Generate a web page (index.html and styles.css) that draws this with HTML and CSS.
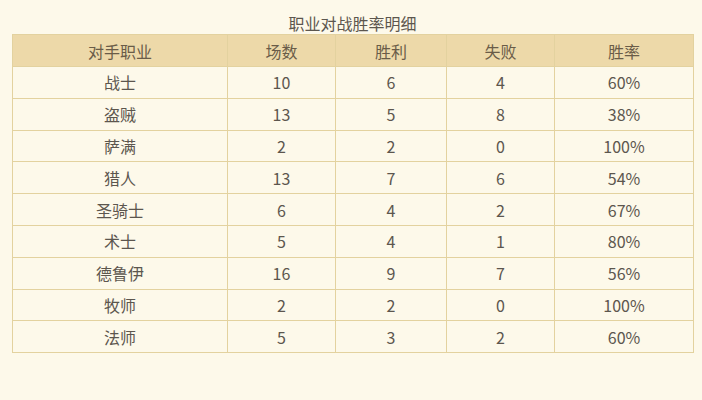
FILE: index.html
```html
<!DOCTYPE html>
<html lang="zh-CN">
<head>
<meta charset="utf-8">
<title>职业对战胜率明细</title>
<link rel="stylesheet" href="styles.css">
</head>
<body>
<div class="wrap">
  <div class="title">职业对战胜率明细</div>
  <table class="stats">
    <colgroup>
      <col class="c1"><col class="c2"><col class="c3"><col class="c4"><col class="c5">
    </colgroup>
    <thead>
      <tr><th>对手职业</th><th>场数</th><th>胜利</th><th>失败</th><th>胜率</th></tr>
    </thead>
    <tbody>
      <tr><td>战士</td><td>10</td><td>6</td><td>4</td><td>60%</td></tr>
      <tr><td>盗贼</td><td>13</td><td>5</td><td>8</td><td>38%</td></tr>
      <tr><td>萨满</td><td>2</td><td>2</td><td>0</td><td>100%</td></tr>
      <tr><td>猎人</td><td>13</td><td>7</td><td>6</td><td>54%</td></tr>
      <tr><td>圣骑士</td><td>6</td><td>4</td><td>2</td><td>67%</td></tr>
      <tr><td>术士</td><td>5</td><td>4</td><td>1</td><td>80%</td></tr>
      <tr><td>德鲁伊</td><td>16</td><td>9</td><td>7</td><td>56%</td></tr>
      <tr><td>牧师</td><td>2</td><td>2</td><td>0</td><td>100%</td></tr>
      <tr><td>法师</td><td>5</td><td>3</td><td>2</td><td>60%</td></tr>
    </tbody>
  </table>
</div>
</body>
</html>
```
FILE: styles.css
```css
html, body {
  margin: 0;
  padding: 0;
  background: #fdf9ea;
}
body {
  width: 702px;
  height: 400px;
  font-family: "Noto Sans CJK SC", "Noto Sans", sans-serif;
  color: #5c564e;
}
.wrap {
  padding: 12px 0 0 12px;
  width: 681px;
}
.title {
  height: 22px;
  line-height: 22px;
  font-size: 16px;
  text-align: center;
  color: #5c564e;
}
.stats {
  width: 681px;
  border-collapse: collapse;
  table-layout: fixed;
  font-size: 16px;
}
.c1 { width: 215px; }
.c2 { width: 108px; }
.c3 { width: 111px; }
.c4 { width: 108px; }
.c5 { width: 139px; }
.stats th,
.stats td {
  border: 1px solid #e3d29f;
  text-align: center;
  padding: 0;
  line-height: 20px;
}
.stats th {
  background: #edd9a9;
  font-weight: normal;
  color: #6a5c48;
  height: 31px;
}
.stats td {
  height: 30.8px;
}
```
